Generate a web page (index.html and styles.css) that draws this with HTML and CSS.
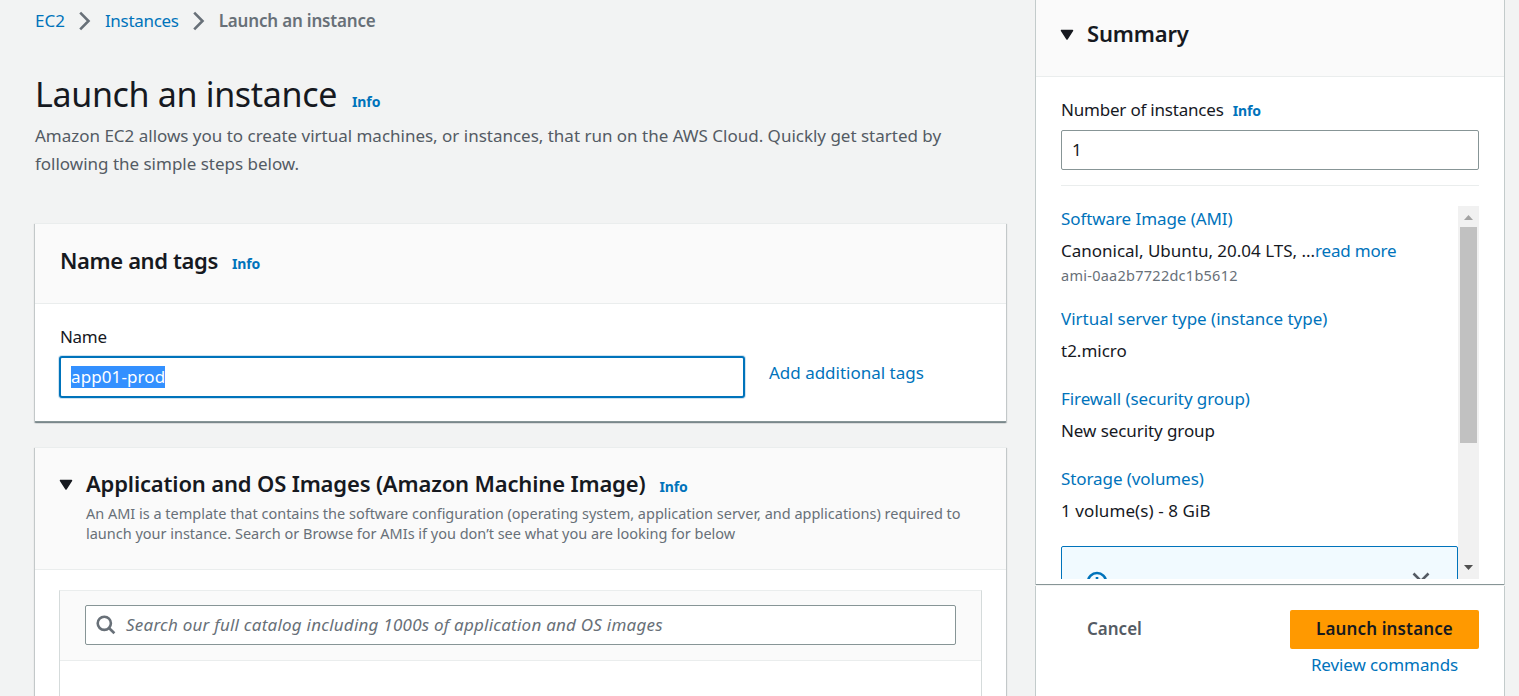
FILE: index.html
```html
<!DOCTYPE html>
<html lang="en">
<head>
<meta charset="utf-8">
<title>Launch an instance</title>
<link rel="stylesheet" href="styles.css">
</head>
<body>
<div class="page">
  <main class="main">
    <nav class="crumbs">
      <a class="t-ec2">EC2</a>
      <svg class="crumb-sep" width="14" height="20" viewBox="0 0 14 20"><path d="M2.200 1.600 10.500 10l-8.300 8.400" /></svg>
      <a class="t-inst">Instances</a>
      <svg class="crumb-sep" width="14" height="20" viewBox="0 0 14 20"><path d="M2.200 1.600 10.500 10l-8.300 8.400" /></svg>
      <b class="t-here">Launch an instance</b>
    </nav>
    <div class="title-row"><h1>Launch an instance</h1><a class="info">Info</a></div>
    <p class="intro">Amazon EC2 allows you to create virtual machines, or instances, that run on the AWS Cloud. Quickly get started by<br>following the simple steps below.</p>

    <section class="card name-card">
      <header class="card-head name-head"><h2 class="t-nt">Name and tags</h2><a class="info">Info</a></header>
      <div class="name-body">
        <div class="field">
          <label class="t-name">Name</label>
          <div class="input focused"><span class="selected">app01-prod</span></div>
        </div>
        <a class="add-tags">Add additional tags</a>
      </div>
    </section>

    <section class="card ami-card">
      <header class="card-head ami-head">
        <svg class="caret" width="14" height="12" viewBox="0 0 14 12"><path d="M1.500 1.500h11L7 10z"/></svg>
        <div>
          <div class="ami-title"><h2 class="t-ami">Application and OS Images (Amazon Machine Image)</h2><a class="info">Info</a></div>
          <p class="ami-desc">An AMI is a template that contains the software configuration (operating system, application server, and applications) required to<br>launch your instance. Search or Browse for AMIs if you don’t see what you are looking for below</p>
        </div>
      </header>
      <div class="catalog">
        <div class="catalog-head">
          <div class="input search">
            <svg width="20" height="20" viewBox="0 0 20 20"><circle cx="8.300" cy="8.300" r="6.600"/><path d="M13 13l5.400 5.200"/></svg>
            <span class="placeholder">Search our full catalog including 1000s of application and OS images</span>
          </div>
        </div>
      </div>
    </section>
  </main>

  <aside class="side">
    <section class="summary">
      <header class="sum-head">
        <svg class="caret" width="14" height="12" viewBox="0 0 14 12"><path d="M1.500 1.500h11L7 10z"/></svg>
        <h2 class="t-sum">Summary</h2>
      </header>
      <div class="sum-body">
        <div class="num-label"><label class="t-num">Number of instances</label><a class="info">Info</a></div>
        <div class="input number">1</div>
        <div class="scroll">
          <div class="items">
            <div class="item"><a class="tight">Software Image (AMI)</a><div class="value"><span>Canonical, Ubuntu, 20.04 LTS, ...</span><a class="t-rm">read more</a></div><small>ami-0aa2b7722dc1b5612</small></div>
            <div class="item"><a>Virtual server type (instance type)</a><div class="value">t2.micro</div></div>
            <div class="item"><a class="tight">Firewall (security group)</a><div class="value tight">New security group</div></div>
            <div class="item"><a class="tight">Storage (volumes)</a><div class="value t-vol">1 volume(s) - 8 GiB</div></div>
            <div class="alert">
              <svg class="alert-info" width="22" height="22" viewBox="0 0 22 22"><circle cx="11" cy="11" r="9"/><path d="M11 6v2.500M11 10v6"/></svg>
              <svg class="alert-close" width="18" height="18" viewBox="0 0 18 18"><path d="M1.500 1.500l15 15M16.500 1.500l-15 15"/></svg>
            </div>
          </div>
          <div class="bar">
            <svg width="21" height="21" viewBox="0 0 21 21"><path fill="#a3a3a3" d="M6 14h9l-4.500-5z"/></svg>
            <div class="thumb"></div>
            <svg class="down" width="21" height="21" viewBox="0 0 21 21"><path fill="#505050" d="M6 7h9l-4.500 5z"/></svg>
          </div>
        </div>
      </div>
    </section>
    <footer class="actions">
      <b class="cancel">Cancel</b>
      <div class="launch-col">
        <div class="launch">Launch instance</div>
        <a class="review">Review commands</a>
      </div>
    </footer>
  </aside>
</div>
</body>
</html>
```
FILE: styles.css
```css
* { box-sizing: border-box; }
body {
  margin: 0;
  height: 696px;
  overflow: hidden;
  background: #f2f3f3;
  color: #16191f;
  font-family: "Noto Sans", "Open Sans", sans-serif;
  font-size: 17px;
  line-height: 26px;
  letter-spacing: -0.01px;
  white-space: nowrap;
}
h1, h2, p { margin: 0; }
a { color: #0073bb; }
svg { display: block; flex: none; }
.page { display: flex; height: 696px; }
.main { width: 971px; margin-left: 35px; flex: none; }
.info { font-size: 14px; font-weight: 700; line-height: 20px; letter-spacing: -0.1px; }
.tight { letter-spacing: -0.08px; }

.crumbs { display: flex; height: 42px; align-items: center; }
.crumb-sep { margin: 0 13px; fill: none; stroke: #687078; stroke-width: 2.6; }
.t-inst { letter-spacing: -0.3px; }
.t-here { color: #687078; font-weight: 600; letter-spacing: -0.18px; }
.title-row { display: flex; align-items: baseline; margin-top: 28px; height: 52px; gap: 15px; }
h1 { font-size: 34px; line-height: 48px; font-weight: 400; letter-spacing: -0.33px; }
.intro { color: #545b64; line-height: 28px; }

.card { background: #fff; box-shadow: 0 1px 1px rgba(0,28,36,.3), 1px 1px 1px rgba(0,28,36,.15), -1px 1px 1px rgba(0,28,36,.15); border-top: 1px solid #eaeded; }
.card-head { background: #fafafa; border-bottom: 1px solid #eaeded; display: flex; }
h2 { font-size: 22px; line-height: 28px; font-weight: 600; }
.t-nt { letter-spacing: -0.38px; }
.t-ami { letter-spacing: -0.16px; }
.t-sum { letter-spacing: -0.16px; }
.name-card { margin-top: 45px; height: 199px; border-bottom: 1px solid #879596; }
.name-head { height: 80px; padding: 22px 25px 0; align-items: baseline; gap: 14px; }
.name-body { display: flex; padding: 20px 24px; }
.field { width: 686px; flex: none; }
.field label { display: block; padding-left: 1px; letter-spacing: -0.3px; }
.input { background: #fff; border: 1px solid #879596; border-radius: 2px; height: 40px; display: flex; align-items: center; }
.focused { margin-top: 6px; height: 42px; border: 2px solid #0073bb; border-radius: 3px; padding-left: 10px; box-shadow: 0 0 0 1px #cfe3f1; }
.selected { background: #3390ff; color: #fff; height: 22px; line-height: 22px; letter-spacing: 0.1px; }
.add-tags { margin: 36px 0 0 24px; }

.ami-card { margin-top: 25px; height: 260px; }
.ami-head { height: 122px; padding: 21px 24px 0; }
.ami-head .caret { margin-top: 10px; }
.caret { fill: #16191f; stroke: #16191f; stroke-width: 1.5; stroke-linejoin: round; }
.ami-head > div { margin-left: 13px; }
.ami-title { display: flex; align-items: baseline; gap: 14px; height: 34px; }
.ami-desc { color: #687078; font-size: 14.5px; line-height: 20px; }
.catalog { margin: 20px 24px 0; height: 120px; border: 1px solid #d5dbdb; border-top-color: #eaeded; border-bottom: 0; }
.catalog-head { height: 70px; background: #fafafa; border-bottom: 1px solid #eaeded; padding: 14px 25px 0; }
.search { padding-left: 10px; }
.search svg { fill: none; stroke: #687078; stroke-width: 2.6; }
.placeholder { margin-left: 10px; color: #687078; font-style: italic; letter-spacing: 0.23px; }

.side { width: 468px; margin-left: 30px; flex: none; }
.summary { height: 585px; background: #fff; border-bottom: 1px solid #879596; box-shadow: 1px 0 0 #c3cbcb, -1px 0 0 #c3cbcb; }
.sum-head { height: 77px; background: #fafafa; border-bottom: 1px solid #eaeded; display: flex; padding: 19px 24px 0; }
.sum-head .caret { margin-top: 10px; }
.sum-head h2 { margin-left: 13px; }
.sum-body { padding: 20px 25px 0; }
.num-label { display: flex; align-items: baseline; gap: 9px; height: 33px; }
.t-num { letter-spacing: -0.2px; }
.number { padding-left: 10px; }
.scroll { display: flex; margin-top: 15px; padding-top: 20px; border-top: 1px solid #eaeded; height: 394px; overflow: hidden; }
.items { width: 397px; height: 373px; overflow: hidden; }
.item { margin-bottom: 22px; }
.item > a { display: block; height: 26px; margin-bottom: 6px; }
.value { height: 26px; }
.t-rm { letter-spacing: -0.2px; }
.t-vol { letter-spacing: 0.08px; }
.item small { display: block; height: 20px; line-height: 22px; font-size: 14.5px; letter-spacing: 0.26px; color: #687078; }
.alert { height: 100px; background: #f1faff; border: 1px solid #0073bb; border-radius: 2px; display: flex; justify-content: space-between; padding: 24px 27px 0 24px; }
.alert svg { fill: none; stroke: #0073bb; stroke-width: 2.6; }
.alert .alert-close { stroke: #545b64; margin-top: 1px; }
.bar { width: 21px; height: 373px; background: #f1f1f1; display: flex; flex-direction: column; }
.thumb { height: 216px; margin: 0 2px; background: #c1c1c1; }
.down { margin-top: auto; }

.actions { margin-top: 1px; height: 120px; background: #fff; box-shadow: 1px 0 0 #c3cbcb, -1px 0 0 #c3cbcb; display: flex; justify-content: space-between; padding: 24px 25px 0 51px; }
.cancel { color: #545b64; font-weight: 600; line-height: 38px; }
.launch-col { width: 189px; text-align: center; }
.launch { background: #ff9900; border-radius: 2px; height: 39px; line-height: 38px; font-weight: 600; letter-spacing: 0.13px; }
.review { display: block; margin-top: 3px; letter-spacing: -0.1px; }
```
